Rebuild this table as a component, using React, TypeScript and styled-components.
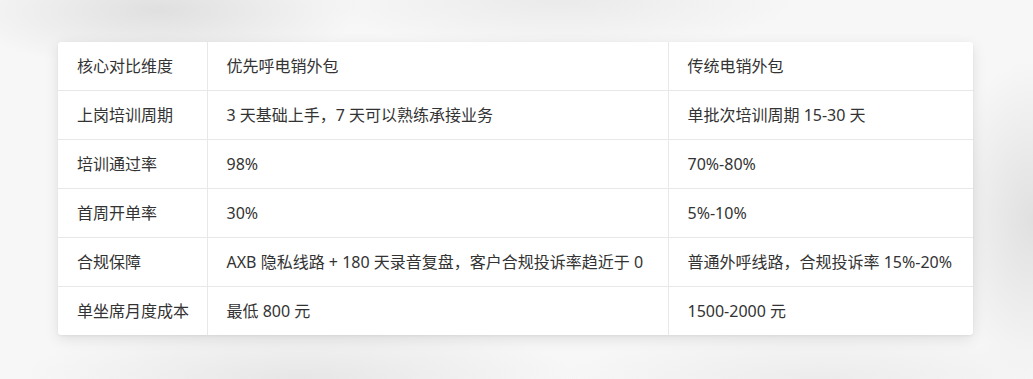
import React from 'react';
import styled, { createGlobalStyle } from 'styled-components';

const GlobalStyle = createGlobalStyle`
  html, body {
    margin: 0;
    padding: 0;
  }
  body {
    width: 1033px;
    height: 379px;
    overflow: hidden;
    font-family: "Noto Sans", "Noto Sans CJK SC", sans-serif;
    background:
      radial-gradient(ellipse 200px 60px at 160px 10px, rgba(200, 200, 200, 0.5), transparent),
      radial-gradient(ellipse 240px 50px at 560px 0px, rgba(215, 215, 215, 0.4), transparent),
      radial-gradient(ellipse 90px 160px at 1033px 220px, rgba(205, 205, 205, 0.55), transparent),
      radial-gradient(ellipse 280px 60px at 300px 379px, rgba(210, 210, 210, 0.45), transparent),
      radial-gradient(ellipse 260px 50px at 820px 379px, rgba(215, 215, 215, 0.35), transparent),
      #f7f7f7;
  }
`;

const Page = styled.div`
  padding: 42px 0 0 58px;
`;

const Card = styled.div`
  width: 915px;
  background: #fff;
  border-radius: 3px;
  box-shadow: 0 4px 14px rgba(0, 0, 0, 0.1), 0 1px 3px rgba(0, 0, 0, 0.05);
  overflow: hidden;
`;

const Table = styled.table`
  width: 100%;
  border-collapse: collapse;
  table-layout: fixed;
  font-size: 16px;
  color: #333;
`;

const Cell = styled.td<{ $last?: boolean }>`
  height: 48px;
  padding: 0 19px;
  white-space: nowrap;
  line-height: 22px;
  border-bottom: ${({ $last }) => ($last ? 'none' : '1px solid #e8e8e8')};
  border-right: 1px solid #e8e8e8;

  &:last-child {
    border-right: none;
  }
`;

const rows: [string, string, string][] = [
  ['核心对比维度', '优先呼电销外包', '传统电销外包'],
  ['上岗培训周期', '3 天基础上手，7 天可以熟练承接业务', '单批次培训周期 15-30 天'],
  ['培训通过率', '98%', '70%-80%'],
  ['首周开单率', '30%', '5%-10%'],
  ['合规保障', 'AXB 隐私线路 + 180 天录音复盘，客户合规投诉率趋近于 0', '普通外呼线路，合规投诉率 15%-20%'],
  ['单坐席月度成本', '最低 800 元', '1500-2000 元'],
];

export default function App() {
  return (
    <>
      <GlobalStyle />
      <Page>
        <Card>
          <Table>
            <colgroup>
              <col style={{ width: 149 }} />
              <col style={{ width: 461 }} />
              <col />
            </colgroup>
            <tbody>
              {rows.map((r, i) => (
                <tr key={i}>
                  {r.map((c, j) => (
                    <Cell key={j} $last={i === rows.length - 1}>
                      {c}
                    </Cell>
                  ))}
                </tr>
              ))}
            </tbody>
          </Table>
        </Card>
      </Page>
    </>
  );
}
